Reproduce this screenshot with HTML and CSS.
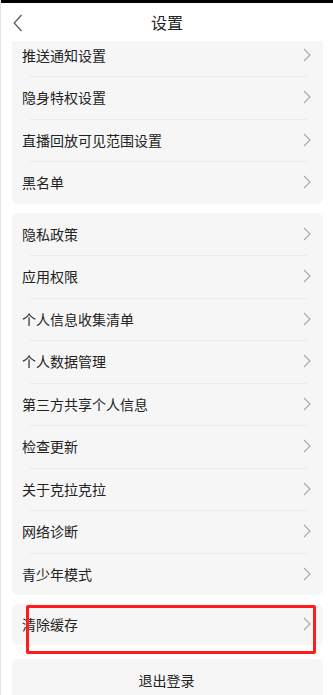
FILE: index.html
```html
<!DOCTYPE html>
<html lang="zh-CN">
<head>
<meta charset="utf-8">
<title>设置</title>
<link rel="stylesheet" href="styles.css">
</head>
<body>
<div class="page">
  <div class="statusbar"></div>
  <header class="header">
    <svg class="back" width="10" height="18" viewBox="0 0 10 18"><polyline points="8.5,1 1.2,9 8.5,17" fill="none" stroke="#555" stroke-width="1.2"/></svg>
    <div class="title">设置</div>
  </header>
  <main class="scroll">
    <section class="card first">
      <div class="row"><span>推送通知设置</span><svg class="chev" width="8" height="14" viewBox="0 0 8 14"><polyline points="1,1 7,7 1,13" fill="none" stroke="#a8a8a8" stroke-width="1.1"/></svg></div>
      <div class="row"><span>隐身特权设置</span><svg class="chev" width="8" height="14" viewBox="0 0 8 14"><polyline points="1,1 7,7 1,13" fill="none" stroke="#a8a8a8" stroke-width="1.1"/></svg></div>
      <div class="row"><span>直播回放可见范围设置</span><svg class="chev" width="8" height="14" viewBox="0 0 8 14"><polyline points="1,1 7,7 1,13" fill="none" stroke="#a8a8a8" stroke-width="1.1"/></svg></div>
      <div class="row"><span>黑名单</span><svg class="chev" width="8" height="14" viewBox="0 0 8 14"><polyline points="1,1 7,7 1,13" fill="none" stroke="#a8a8a8" stroke-width="1.1"/></svg></div>
    </section>
    <section class="card">
      <div class="row"><span>隐私政策</span><svg class="chev" width="8" height="14" viewBox="0 0 8 14"><polyline points="1,1 7,7 1,13" fill="none" stroke="#a8a8a8" stroke-width="1.1"/></svg></div>
      <div class="row"><span>应用权限</span><svg class="chev" width="8" height="14" viewBox="0 0 8 14"><polyline points="1,1 7,7 1,13" fill="none" stroke="#a8a8a8" stroke-width="1.1"/></svg></div>
      <div class="row"><span>个人信息收集清单</span><svg class="chev" width="8" height="14" viewBox="0 0 8 14"><polyline points="1,1 7,7 1,13" fill="none" stroke="#a8a8a8" stroke-width="1.1"/></svg></div>
      <div class="row"><span>个人数据管理</span><svg class="chev" width="8" height="14" viewBox="0 0 8 14"><polyline points="1,1 7,7 1,13" fill="none" stroke="#a8a8a8" stroke-width="1.1"/></svg></div>
      <div class="row"><span>第三方共享个人信息</span><svg class="chev" width="8" height="14" viewBox="0 0 8 14"><polyline points="1,1 7,7 1,13" fill="none" stroke="#a8a8a8" stroke-width="1.1"/></svg></div>
      <div class="row"><span>检查更新</span><svg class="chev" width="8" height="14" viewBox="0 0 8 14"><polyline points="1,1 7,7 1,13" fill="none" stroke="#a8a8a8" stroke-width="1.1"/></svg></div>
      <div class="row"><span>关于克拉克拉</span><svg class="chev" width="8" height="14" viewBox="0 0 8 14"><polyline points="1,1 7,7 1,13" fill="none" stroke="#a8a8a8" stroke-width="1.1"/></svg></div>
      <div class="row"><span>网络诊断</span><svg class="chev" width="8" height="14" viewBox="0 0 8 14"><polyline points="1,1 7,7 1,13" fill="none" stroke="#a8a8a8" stroke-width="1.1"/></svg></div>
      <div class="row"><span>青少年模式</span><svg class="chev" width="8" height="14" viewBox="0 0 8 14"><polyline points="1,1 7,7 1,13" fill="none" stroke="#a8a8a8" stroke-width="1.1"/></svg></div>
    </section>
    <section class="card cache">
      <div class="row short"><span>清除缓存</span><svg class="chev" width="8" height="14" viewBox="0 0 8 14"><polyline points="1,1 7,7 1,13" fill="none" stroke="#a8a8a8" stroke-width="1.1"/></svg></div>
      <div class="highlight"></div>
    </section>
    <section class="card logout">
      <div class="row center"><span>退出登录</span></div>
    </section>
  </main>
</div>
</body>
</html>
```
FILE: styles.css
```css
* { box-sizing: border-box; }
html, body {
  margin: 0;
  padding: 0;
  background: #fff;
}
body {
  font-family: "Noto Sans CJK SC", "Noto Sans", sans-serif;
  color: #222;
}
.page {
  width: 333px;
  height: 695px;
  overflow: hidden;
  display: flex;
  flex-direction: column;
  border-left: 1px solid #e4e4e4;
}
.statusbar {
  height: 3px;
  background: #000;
  flex: none;
}
.header {
  position: relative;
  height: 38px;
  flex: none;
  display: flex;
  align-items: center;
  justify-content: center;
  background: #fff;
  z-index: 2;
}
.back {
  position: absolute;
  left: 12px;
  top: 11px;
}
.title {
  font-size: 16px;
  line-height: 20px;
  margin-top: 0;
  color: #222;
}
.scroll {
  flex: 1;
  overflow: hidden;
  padding: 0 10px 0 11px;
}
.card {
  position: relative;
  background: #f6f6f6;
  border-radius: 6px;
  margin-bottom: 9px;
}
.card.first {
  margin-top: -7.5px;
}
.row {
  height: 42.5px;
  display: flex;
  align-items: center;
  justify-content: space-between;
  padding: 0 12px 0 10px;
  font-size: 14px;
  position: relative;
}
.row + .row::before {
  content: "";
  position: absolute;
  left: 18px;
  right: 16px;
  top: 0;
  height: 1px;
  background: #ebebeb;
}
.row.short {
  height: 41px;
}
.card.cache {
  margin-top: -0.5px;
  margin-bottom: 14px;
}
.row.center {
  justify-content: center;
  height: 42px;
}
.highlight {
  position: absolute;
  left: 14px;
  top: 1px;
  width: 290px;
  height: 49px;
  border: 3px solid #ff1c1c;
  border-radius: 2px;
}
```
